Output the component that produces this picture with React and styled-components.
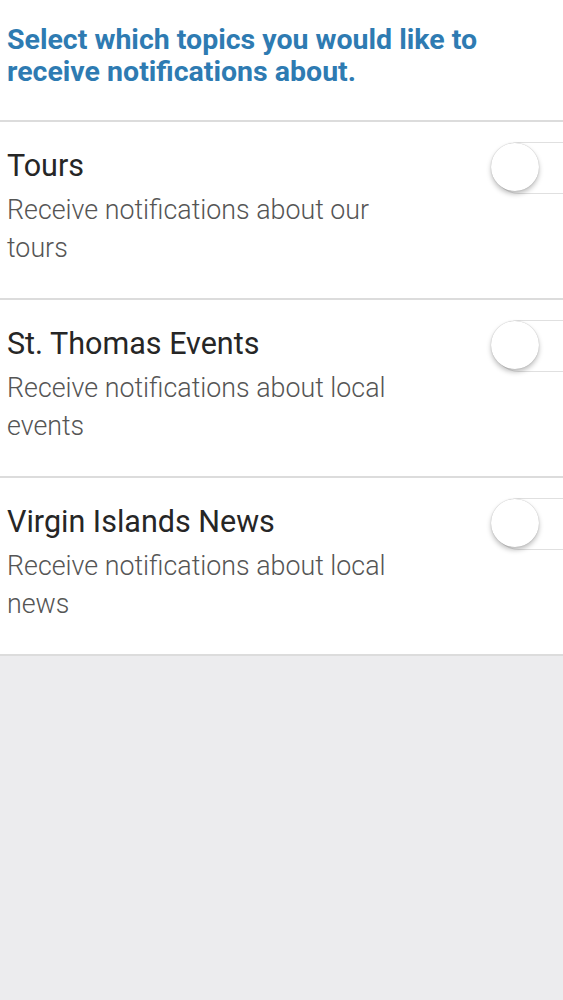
import React, { useState } from 'react'
import styled, { createGlobalStyle } from 'styled-components'

const GlobalStyle = createGlobalStyle`
  html, body {
    margin: 0;
    padding: 0;
    background: #ececee;
    font-family: Roboto, "Noto Sans", sans-serif;
    overflow-x: hidden;
  }
`

const Page = styled.div`
  min-height: 1000px;
  background: #ececee;
  overflow: hidden;
`

const Header = styled.div`
  background: #fff;
  padding: 24px 7px 32px;
  border-bottom: 2px solid #dcdcdc;
`

const Intro = styled.h1`
  margin: 0;
  font-size: 28.5px;
  line-height: 32px;
  font-weight: 700;
  color: #2e7bb2;
  max-width: 530px;
`

const Row = styled.div`
  display: flex;
  background: #fff;
  padding: 27px 0 31px 7px;
  border-bottom: 2px solid #dcdcdc;
`

const Text = styled.div`
  flex: 1;
  max-width: 400px;
`

const Title = styled.div`
  font-size: 30.5px;
  line-height: 34px;
  color: #262626;
  margin-bottom: 8px;
`

const Description = styled.div`
  font-size: 26.8px;
  line-height: 38px;
  font-weight: 300;
  color: #555;
`

const Track = styled.button`
  position: relative;
  margin: -7px -40px 0 auto;
  width: 110px;
  height: 52px;
  flex-shrink: 0;
  border-radius: 26px;
  border: 1.5px solid #e0e0e0;
  background: ${({ on }) => (on ? '#4cd964' : '#fff')};
  padding: 0;
  cursor: pointer;
`

const Knob = styled.span`
  position: absolute;
  top: 0;
  left: ${({ on }) => (on ? '58px' : '-3px')};
  width: 48px;
  height: 48px;
  border-radius: 50%;
  background: #fff;
  box-shadow: 0 3px 5px rgba(0, 0, 0, 0.25), 0 0 1px rgba(0, 0, 0, 0.3);
  transition: left 0.2s;
`

const topics = [
  { title: 'Tours', description: 'Receive notifications about our tours' },
  { title: 'St. Thomas Events', description: 'Receive notifications about local events' },
  { title: 'Virgin Islands News', description: 'Receive notifications about local news' },
]

const Toggle = () => {
  const [on, setOn] = useState(false)
  return (
    <Track on={on ? 1 : 0} onClick={() => setOn(!on)} aria-pressed={on}>
      <Knob on={on ? 1 : 0} />
    </Track>
  )
}

const App = () => (
  <Page>
    <GlobalStyle />
    <Header>
      <Intro>Select which topics you would like to receive notifications about.</Intro>
    </Header>
    {topics.map(topic => (
      <Row key={topic.title}>
        <Text>
          <Title>{topic.title}</Title>
          <Description>{topic.description}</Description>
        </Text>
        <Toggle />
      </Row>
    ))}
  </Page>
)

export default App
